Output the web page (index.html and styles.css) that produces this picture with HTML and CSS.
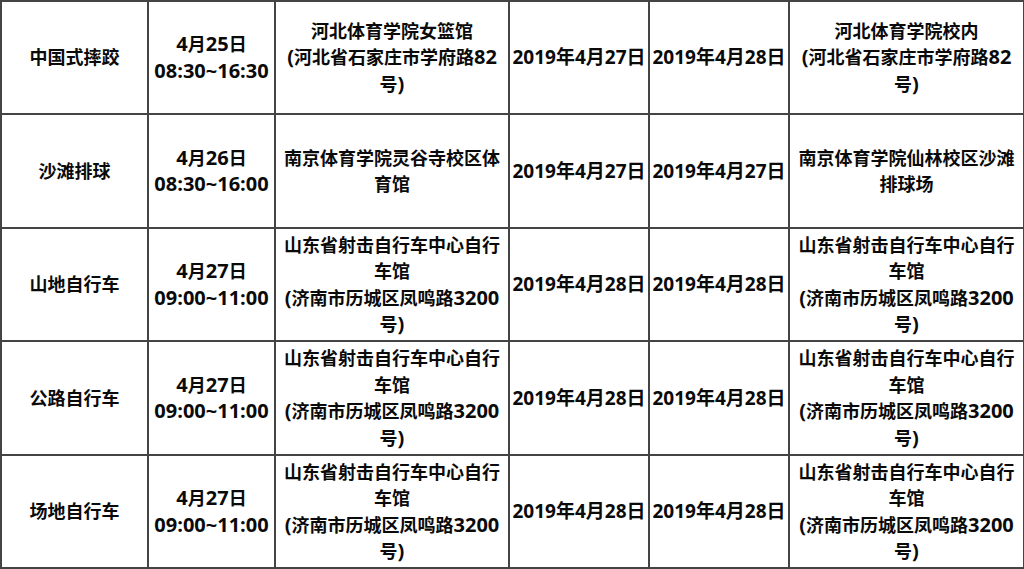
FILE: index.html
```html
<!DOCTYPE html>
<html lang="zh-CN">
<head>
<meta charset="utf-8">
<link rel="stylesheet" href="styles.css">
</head>
<body>
<table class="sched">
  <colgroup>
    <col class="c1"><col class="c2"><col class="c3"><col class="c4"><col class="c5"><col class="c6">
  </colgroup>
  <tbody>
    <tr class="r1">
      <td>中国式摔跤</td>
      <td><span class="n">4</span>月<span class="n">25</span>日<br><span class="n">08:30~16:30</span></td>
      <td>河北体育学院女篮馆<br><span class="n">(</span>河北省石家庄市学府路<span class="n">82</span><br>号<span class="n">)</span></td>
      <td class="date">2019年4月27日</td>
      <td class="date">2019年4月28日</td>
      <td>河北体育学院校内<br><span class="n">(</span>河北省石家庄市学府路<span class="n">82</span><br>号<span class="n">)</span></td>
    </tr>
    <tr class="r2">
      <td>沙滩排球</td>
      <td><span class="n">4</span>月<span class="n">26</span>日<br><span class="n">08:30~16:00</span></td>
      <td>南京体育学院灵谷寺校区体<br>育馆</td>
      <td class="date">2019年4月27日</td>
      <td class="date">2019年4月27日</td>
      <td>南京体育学院仙林校区沙滩<br>排球场</td>
    </tr>
    <tr class="r3">
      <td>山地自行车</td>
      <td><span class="n">4</span>月<span class="n">27</span>日<br><span class="n">09:00~11:00</span></td>
      <td>山东省射击自行车中心自行<br>车馆<br><span class="n">(</span>济南市历城区凤鸣路<span class="n">3200</span><br>号<span class="n">)</span></td>
      <td class="date">2019年4月28日</td>
      <td class="date">2019年4月28日</td>
      <td>山东省射击自行车中心自行<br>车馆<br><span class="n">(</span>济南市历城区凤鸣路<span class="n">3200</span><br>号<span class="n">)</span></td>
    </tr>
    <tr class="r4">
      <td>公路自行车</td>
      <td><span class="n">4</span>月<span class="n">27</span>日<br><span class="n">09:00~11:00</span></td>
      <td>山东省射击自行车中心自行<br>车馆<br><span class="n">(</span>济南市历城区凤鸣路<span class="n">3200</span><br>号<span class="n">)</span></td>
      <td class="date">2019年4月28日</td>
      <td class="date">2019年4月28日</td>
      <td>山东省射击自行车中心自行<br>车馆<br><span class="n">(</span>济南市历城区凤鸣路<span class="n">3200</span><br>号<span class="n">)</span></td>
    </tr>
    <tr class="r5">
      <td>场地自行车</td>
      <td><span class="n">4</span>月<span class="n">27</span>日<br><span class="n">09:00~11:00</span></td>
      <td>山东省射击自行车中心自行<br>车馆<br><span class="n">(</span>济南市历城区凤鸣路<span class="n">3200</span><br>号<span class="n">)</span></td>
      <td class="date">2019年4月28日</td>
      <td class="date">2019年4月28日</td>
      <td>山东省射击自行车中心自行<br>车馆<br><span class="n">(</span>济南市历城区凤鸣路<span class="n">3200</span><br>号<span class="n">)</span></td>
    </tr>
  </tbody>
</table>
</body>
</html>
```

FILE: styles.css
```css
html, body {
  margin: 0;
  padding: 0;
  background: #ffffff;
}

.sched {
  border-collapse: collapse;
  table-layout: fixed;
  width: 1023px;
  font-family: "Open Sans", "Noto Sans CJK SC", sans-serif;
  font-weight: 700;
  font-size: 18px;
  line-height: 26.5px;
  color: #0a0a0a;
}

.c1 { width: 147px; }
.c2 { width: 127px; }
.c3 { width: 234px; }
.c4 { width: 140px; }
.c5 { width: 140px; }
.c6 { width: 235px; }

.sched td {
  border: 2px solid #444;
  text-align: center;
  vertical-align: middle;
  padding: 0;
  white-space: nowrap;
}

.sched .n {
  font-size: 20px;
}

.sched td.date {
  font-size: 19px;
}

.r1 td, .r3 td, .r5 td { height: 111px; }
.r2 td, .r4 td { height: 112px; }
```
